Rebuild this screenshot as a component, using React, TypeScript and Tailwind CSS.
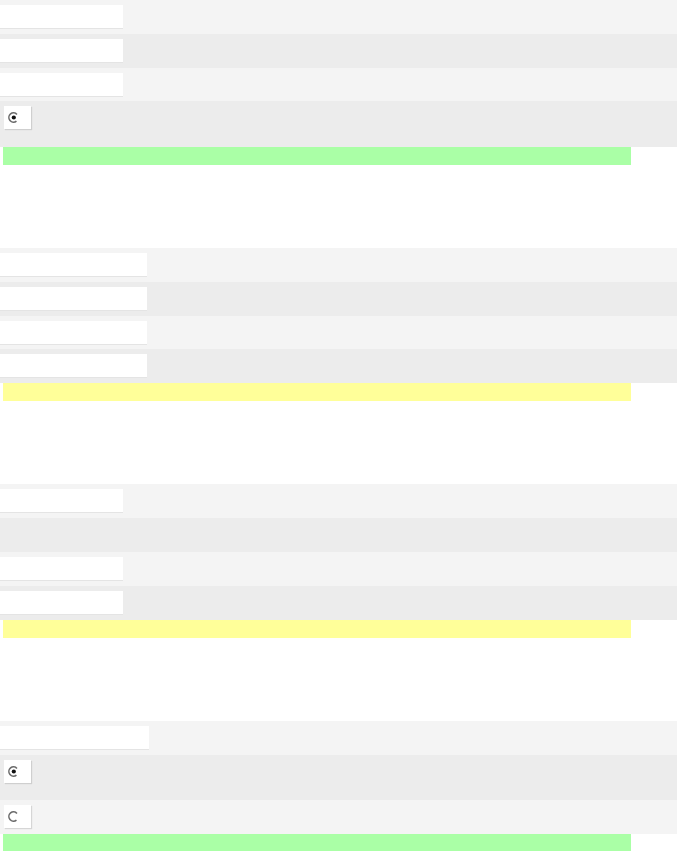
const Input = ({ w }: { w: string }) => (
  <div className={`${w} h-[24px] bg-white border-b border-[#e4e4e4]`} />
);

const Radio = ({ checked }: { checked?: boolean }) => (
  <div className="ml-[4px] w-[27px] h-[23px] bg-white shadow-[1px_1px_1px_rgba(0,0,0,0.12)] flex items-center pl-[3px]">
    <svg width="13" height="13" viewBox="0 0 13 13">
      <circle cx="6.5" cy="6.5" r="4.6" fill="white" stroke="#6b6b6b" strokeWidth="1.6" strokeDasharray="21 8" transform="rotate(50 6.5 6.5)" />
      {checked && <circle cx="6.8" cy="6.5" r="2.1" fill="#111" />}
    </svg>
  </div>
);

const Row = ({ alt, h = "h-[34px]", children }: { alt?: boolean; h?: string; children?: React.ReactNode }) => (
  <div className={`${h} ${alt ? "bg-[#ececec]" : "bg-[#f4f4f4]"} pt-[5px]`}>{children}</div>
);

const Bar = ({ color }: { color: string }) => <div className={`ml-[3px] w-[628px] h-[18px] ${color}`} />;

export default function App() {
  return (
    <div className="w-[677px] h-[851px] overflow-hidden bg-white" style={{ fontFamily: "'Liberation Sans', sans-serif" }}>
      <section>
        <Row><Input w="w-[123px]" /></Row>
        <Row alt><Input w="w-[123px]" /></Row>
        <Row h="h-[33px]"><Input w="w-[123px]" /></Row>
        <Row alt h="h-[46px]"><Radio checked /></Row>
        <Bar color="bg-[#aaffa6]" />
      </section>
      <section className="mt-[83px]">
        <Row><Input w="w-[147px]" /></Row>
        <Row alt><Input w="w-[147px]" /></Row>
        <Row h="h-[33px]"><Input w="w-[147px]" /></Row>
        <Row alt><Input w="w-[147px]" /></Row>
        <Bar color="bg-[#ffff99]" />
      </section>
      <section className="mt-[83px]">
        <Row><Input w="w-[123px]" /></Row>
        <Row alt />
        <Row><Input w="w-[123px]" /></Row>
        <Row alt><Input w="w-[123px]" /></Row>
        <Bar color="bg-[#ffff99]" />
      </section>
      <section className="mt-[83px]">
        <Row><Input w="w-[149px]" /></Row>
        <Row alt h="h-[45px]"><Radio checked /></Row>
        <Row><Radio /></Row>
        <Bar color="bg-[#aaffa6]" />
      </section>
    </div>
  );
}
